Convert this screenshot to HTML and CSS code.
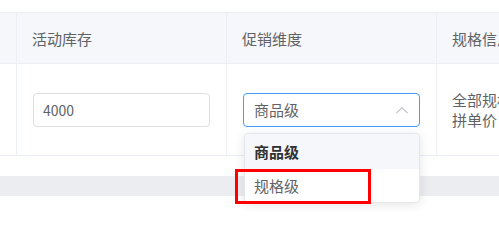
FILE: index.html
```html
<!DOCTYPE html>
<html lang="zh-CN">
<head>
<meta charset="utf-8">
<title>活动设置</title>
<link rel="stylesheet" href="styles.css">
</head>
<body>
<div class="page">
  <div class="table">
    <div class="th first"></div>
    <div class="th">活动库存</div>
    <div class="th">促销维度</div>
    <div class="th last">规格信息</div>

    <div class="td first"></div>
    <div class="td">
      <div class="input">4000</div>
    </div>
    <div class="td">
      <div class="select">
        <div class="select-box">
          <span>商品级</span>
          <svg class="arrow" width="12" height="7" viewBox="0 0 12 7"><polyline points="0.5,6 6,0.8 11.5,6" fill="none" stroke="#c0c4cc" stroke-width="1.1"/></svg>
        </div>
        <div class="dropdown">
          <div class="option selected">商品级</div>
          <div class="option">规格级</div>
        </div>
      </div>
    </div>
    <div class="td last">
      <div class="spec">
        <div>全部规格</div>
        <div>拼单价：</div>
      </div>
    </div>
  </div>
  <div class="band"></div>
  <div class="highlight"></div>
</div>
</body>
</html>
```

FILE: styles.css
```css
html, body {
  margin: 0;
  padding: 0;
  background: #fff;
}
body {
  font-family: "Noto Sans CJK SC", "Noto Sans", sans-serif;
  font-size: 15px;
  color: #606266;
  overflow: hidden;
}
.page {
  position: relative;
  padding-top: 12px;
  width: 499px;
  height: 211px;
  box-sizing: border-box;
}
.table {
  display: grid;
  grid-template-columns: 17px 210px 210px 1fr;
  border-top: 1px solid #ebeef5;
  border-bottom: 1px solid #ebeef5;
}
.th, .td {
  box-sizing: border-box;
  border-right: 1px solid #ebeef5;
  min-width: 0;
}
.th.last, .td.last {
  border-right: none;
}
.th {
  height: 51px;
  background: #f5f7fa;
  border-bottom: 1px solid #ebeef5;
  display: flex;
  align-items: center;
  padding-left: 15px;
  white-space: nowrap;
  overflow: hidden;
}
.td {
  height: 91px;
  display: flex;
  align-items: center;
  padding: 0 16px;
}
.td.first, .th.first {
  padding: 0;
}
.td.last {
  padding: 0 0 0 15px;
  overflow: hidden;
}
.input {
  box-sizing: border-box;
  width: 100%;
  height: 34px;
  border: 1px solid #dcdfe6;
  border-radius: 4px;
  display: flex;
  align-items: center;
  padding: 0 9px;
  font-size: 14px;
  color: #606266;
}
.select {
  position: relative;
  width: 100%;
}
.select-box {
  box-sizing: border-box;
  height: 34px;
  border: 1px solid #409eff;
  border-radius: 4px;
  display: flex;
  align-items: center;
  justify-content: space-between;
  padding: 0 11px 0 10px;
}
.arrow {
  display: block;
  margin-top: 2px;
}
.dropdown {
  position: absolute;
  top: calc(100% + 6px);
  left: 1px;
  right: 0;
  background: #fff;
  border: 1px solid #e4e7ed;
  border-radius: 4px;
  box-shadow: 0 2px 12px rgba(0, 0, 0, 0.1);
  overflow: hidden;
  z-index: 2;
}
.option {
  height: 33px;
  display: flex;
  align-items: center;
  padding-left: 9px;
  color: #606266;
}
.option.selected {
  height: 35px;
  background: #f5f7fa;
  color: #303133;
  font-weight: 700;
}
.spec {
  white-space: nowrap;
  line-height: 20px;
  color: #606266;
}
.band {
  margin-top: 20px;
  height: 20px;
  background: #ebedf1;
}
.highlight {
  position: absolute;
  left: 235px;
  top: 169px;
  width: 136px;
  height: 35px;
  box-sizing: border-box;
  border: 3px solid #ff0000;
  z-index: 3;
}
```
